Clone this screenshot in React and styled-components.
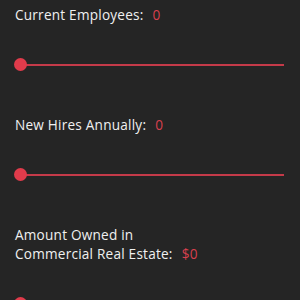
import React from "react";
import styled, { createGlobalStyle } from "styled-components";

const Global = createGlobalStyle`
  html, body {
    margin: 0;
    padding: 0;
    background: #252525;
  }
  body {
    font-family: "Open Sans", "Liberation Sans", sans-serif;
  }
`;

const Page = styled.div`
  width: 300px;
  height: 300px;
  overflow: hidden;
  background: #252525;
  padding: 5px 16px 0 15px;
  box-sizing: border-box;
`;

const Field = styled.div`
  margin-bottom: 43px;
`;

const Label = styled.div`
  color: #f0f0f0;
  font-size: 13.6px;
  font-weight: 500;
  line-height: 19px;
  letter-spacing: 0.22px;
`;

const Value = styled.span`
  color: #d8404e;
  margin-left: 9px;
`;

const Slider = styled.div`
  position: relative;
  height: 14px;
  margin: 34px 0 0 -1px;
`;

const Track = styled.div`
  position: absolute;
  left: 6px;
  right: 0;
  top: 6px;
  height: 2px;
  background: #c53a49;
`;

const Thumb = styled.div`
  position: absolute;
  left: 0;
  top: 0;
  width: 13px;
  height: 13px;
  border-radius: 50%;
  background: #e03b4b;
`;

const fields = [
  { label: ["Current Employees:"], value: "0" },
  { label: ["New Hires Annually:"], value: "0" },
  { label: ["Amount Owned in", "Commercial Real Estate:"], value: "$0" },
];

function RangeField({ label, value }) {
  return (
    <Field>
      <Label>
        {label.map((line, i) => (
          <div key={i}>
            {line}
            {i === label.length - 1 && <Value>{value}</Value>}
          </div>
        ))}
      </Label>
      <Slider>
        <Track />
        <Thumb />
      </Slider>
    </Field>
  );
}

export default function App() {
  return (
    <Page>
      <Global />
      {fields.map((f, i) => (
        <RangeField key={i} label={f.label} value={f.value} />
      ))}
    </Page>
  );
}
